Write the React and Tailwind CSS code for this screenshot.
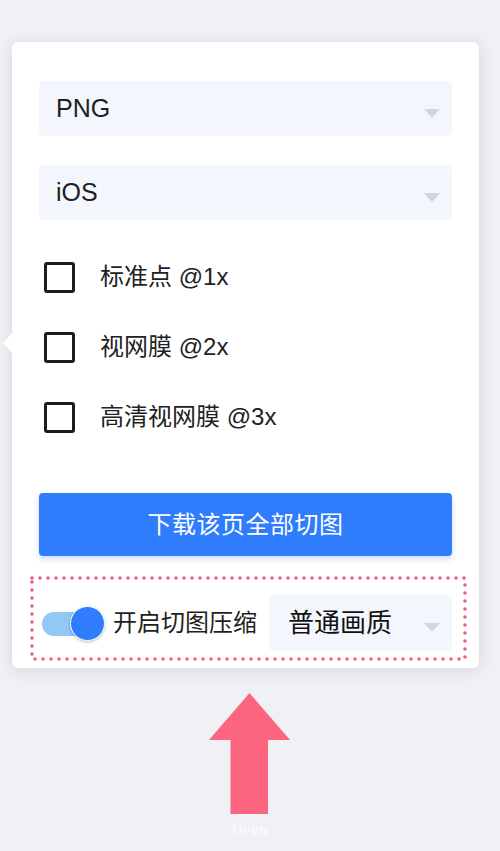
import React from "react";

const FONT = { fontFamily: '"Liberation Sans", "Noto Sans CJK SC", sans-serif' };

function Caret() {
  return (
    <div className="ml-auto mt-[9px] w-0 h-0 border-x-[8.5px] border-x-transparent border-t-[9px] border-t-[#d3d5db]" />
  );
}

function Select({ label, className = "" }) {
  return (
    <div className={`flex items-center h-[55px] rounded-[5px] bg-[#f3f6fc] pl-[17px] pr-[12px] ${className}`}>
      <span className="text-[25px] text-[#1f1f1f] leading-none">{label}</span>
      <Caret />
    </div>
  );
}

function CheckRow({ label }) {
  return (
    <div className="flex items-center h-[30px] pl-[5px]">
      <div className="w-[31px] h-[31px] rounded-[3px] border-[3px] border-[#1c1c1c] bg-white" />
      <span className="ml-[25px] text-[24px] text-[#222] leading-none">{label}</span>
    </div>
  );
}

export default function App() {
  return (
    <div className="w-[500px] h-[851px] bg-[#eff1f5] pt-[42px] flex flex-col" style={FONT}>
      <div className="relative ml-[12px] w-[467px] h-[626px] bg-white rounded-[6px] shadow-[0_2px_16px_rgba(40,50,90,0.14)] px-[27px] pt-[39px]">
        {/* popover caret */}
        <div className="absolute left-[-9px] top-[291px] w-0 h-0 border-y-[10px] border-y-transparent border-r-[9px] border-r-white" />

        <Select label="PNG" />
        <Select label="iOS" className="mt-[29px]" />

        <div className="mt-[42px] flex flex-col gap-[40px]">
          <CheckRow label="标准点 @1x" />
          <CheckRow label="视网膜 @2x" />
          <CheckRow label="高清视网膜 @3x" />
        </div>

        <button className="mt-[61px] w-full h-[63px] rounded-[4px] bg-[#2f7cfd] text-white text-[24px] tracking-[0.5px] shadow-[0_3px_6px_rgba(47,124,253,0.25)]">
          下载该页全部切图
        </button>

        <div className="relative mt-[39px] flex items-center h-[56px]">
          {/* dotted annotation */}
          <svg className="absolute left-[-9px] top-[-19px]" width="437" height="85" viewBox="0 0 437 85">
            <rect x="2" y="2" width="433" height="81" fill="none" stroke="#f65a7b" strokeWidth="3.6" strokeLinecap="round" strokeDasharray="0 8" />
          </svg>

          <div className="relative ml-[3px] w-[63px] h-[35px] shrink-0">
            <div className="absolute left-0 top-[6px] w-[54px] h-[24px] rounded-full bg-[#93c7f6]" />
            <div className="absolute left-[28px] top-0 w-[35px] h-[35px] rounded-full bg-[#2f7cfd] border border-white shadow-[0_1px_3px_rgba(0,0,0,0.25)]" />
          </div>
          <span className="ml-[8px] text-[24px] text-[#1f1f1f] leading-none whitespace-nowrap">开启切图压缩</span>

          <div className="ml-auto flex items-center w-[183px] h-[56px] rounded-[5px] bg-[#f3f6fc] pl-[19px] pr-[12px]">
            <span className="text-[26px] text-[#111] leading-none">普通画质</span>
            <Caret />
          </div>
        </div>
      </div>

      <div className="flex flex-col items-center mt-[25px]">
        <svg width="82" height="122" viewBox="0 0 82 122">
          <polygon points="40.5,0 81,47 59,47 59,121 21.5,121 21.5,47 0,47" fill="#fb6580" />
        </svg>
        <div className="mt-[8px] text-[14px] text-white/70 leading-none font-bold" style={FONT}>UI·cn</div>
      </div>
    </div>
  );
}
